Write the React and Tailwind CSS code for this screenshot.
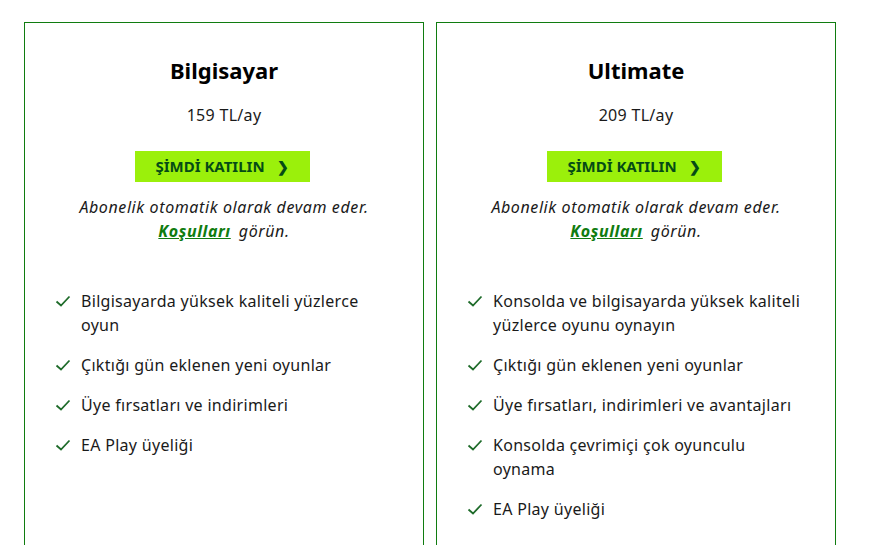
import React from "react";

const plans = [
  {
    name: "Bilgisayar",
    price: "159 TL/ay",
    features: [
      "Bilgisayarda yüksek kaliteli yüzlerce oyun",
      "Çıktığı gün eklenen yeni oyunlar",
      "Üye fırsatları ve indirimleri",
      "EA Play üyeliği",
    ],
  },
  {
    name: "Ultimate",
    price: "209 TL/ay",
    features: [
      "Konsolda ve bilgisayarda yüksek kaliteli yüzlerce oyunu oynayın",
      "Çıktığı gün eklenen yeni oyunlar",
      "Üye fırsatları, indirimleri ve avantajları",
      "Konsolda çevrimiçi çok oyunculu oynama",
      "EA Play üyeliği",
    ],
  },
];

const Check = () => (
  <svg width="16" height="16" viewBox="0 0 16 16" className="mt-1 shrink-0">
    <path d="M1.5 8.5 L6 12.5 L14.5 3.5" fill="none" stroke="#1e6b2a" strokeWidth="1.8" />
  </svg>
);

const PlanCard = ({ plan }) => (
  <div className="w-[400px] h-[600px] border border-[#107c10] px-7 pt-[33px] flex flex-col items-center text-[#1a1a1a]">
    <h2 className="text-[22px] leading-[28px] font-bold text-black">{plan.name}</h2>
    <p className="mt-[19px] text-base leading-6 tracking-[0.3px]">{plan.price}</p>
    <button className="mt-6 mr-1 w-[175px] h-[31px] bg-[#9bf00b] text-[#054b16] text-[15px] font-bold flex items-center justify-center gap-3">
      ŞİMDİ KATILIN
      <span className="text-[14px]">❯</span>
    </button>
    <p className="mt-[13px] text-base leading-6 italic text-center tracking-[0.6px]">
      Abonelik otomatik olarak devam eder.
      <br />
      <a href="#" className="font-bold text-[#107c10] underline mr-2">
        Koşulları
      </a>
      görün.
    </p>
    <ul className="mt-[46px] w-full flex flex-col gap-4 pr-1">
      {plan.features.map((f, i) => (
        <li key={i} className="flex gap-[10px] pl-[2px] text-base leading-6 tracking-[0.3px]">
          <Check />
          <span>{f}</span>
        </li>
      ))}
    </ul>
  </div>
);

export default function App() {
  return (
    <div className="w-[892px] h-[545px] overflow-hidden bg-white pl-6 pt-[22px] flex gap-3" style={{ fontFamily: '"Noto Sans", sans-serif' }}>
      {plans.map((p) => (
        <PlanCard key={p.name} plan={p} />
      ))}
    </div>
  );
}
